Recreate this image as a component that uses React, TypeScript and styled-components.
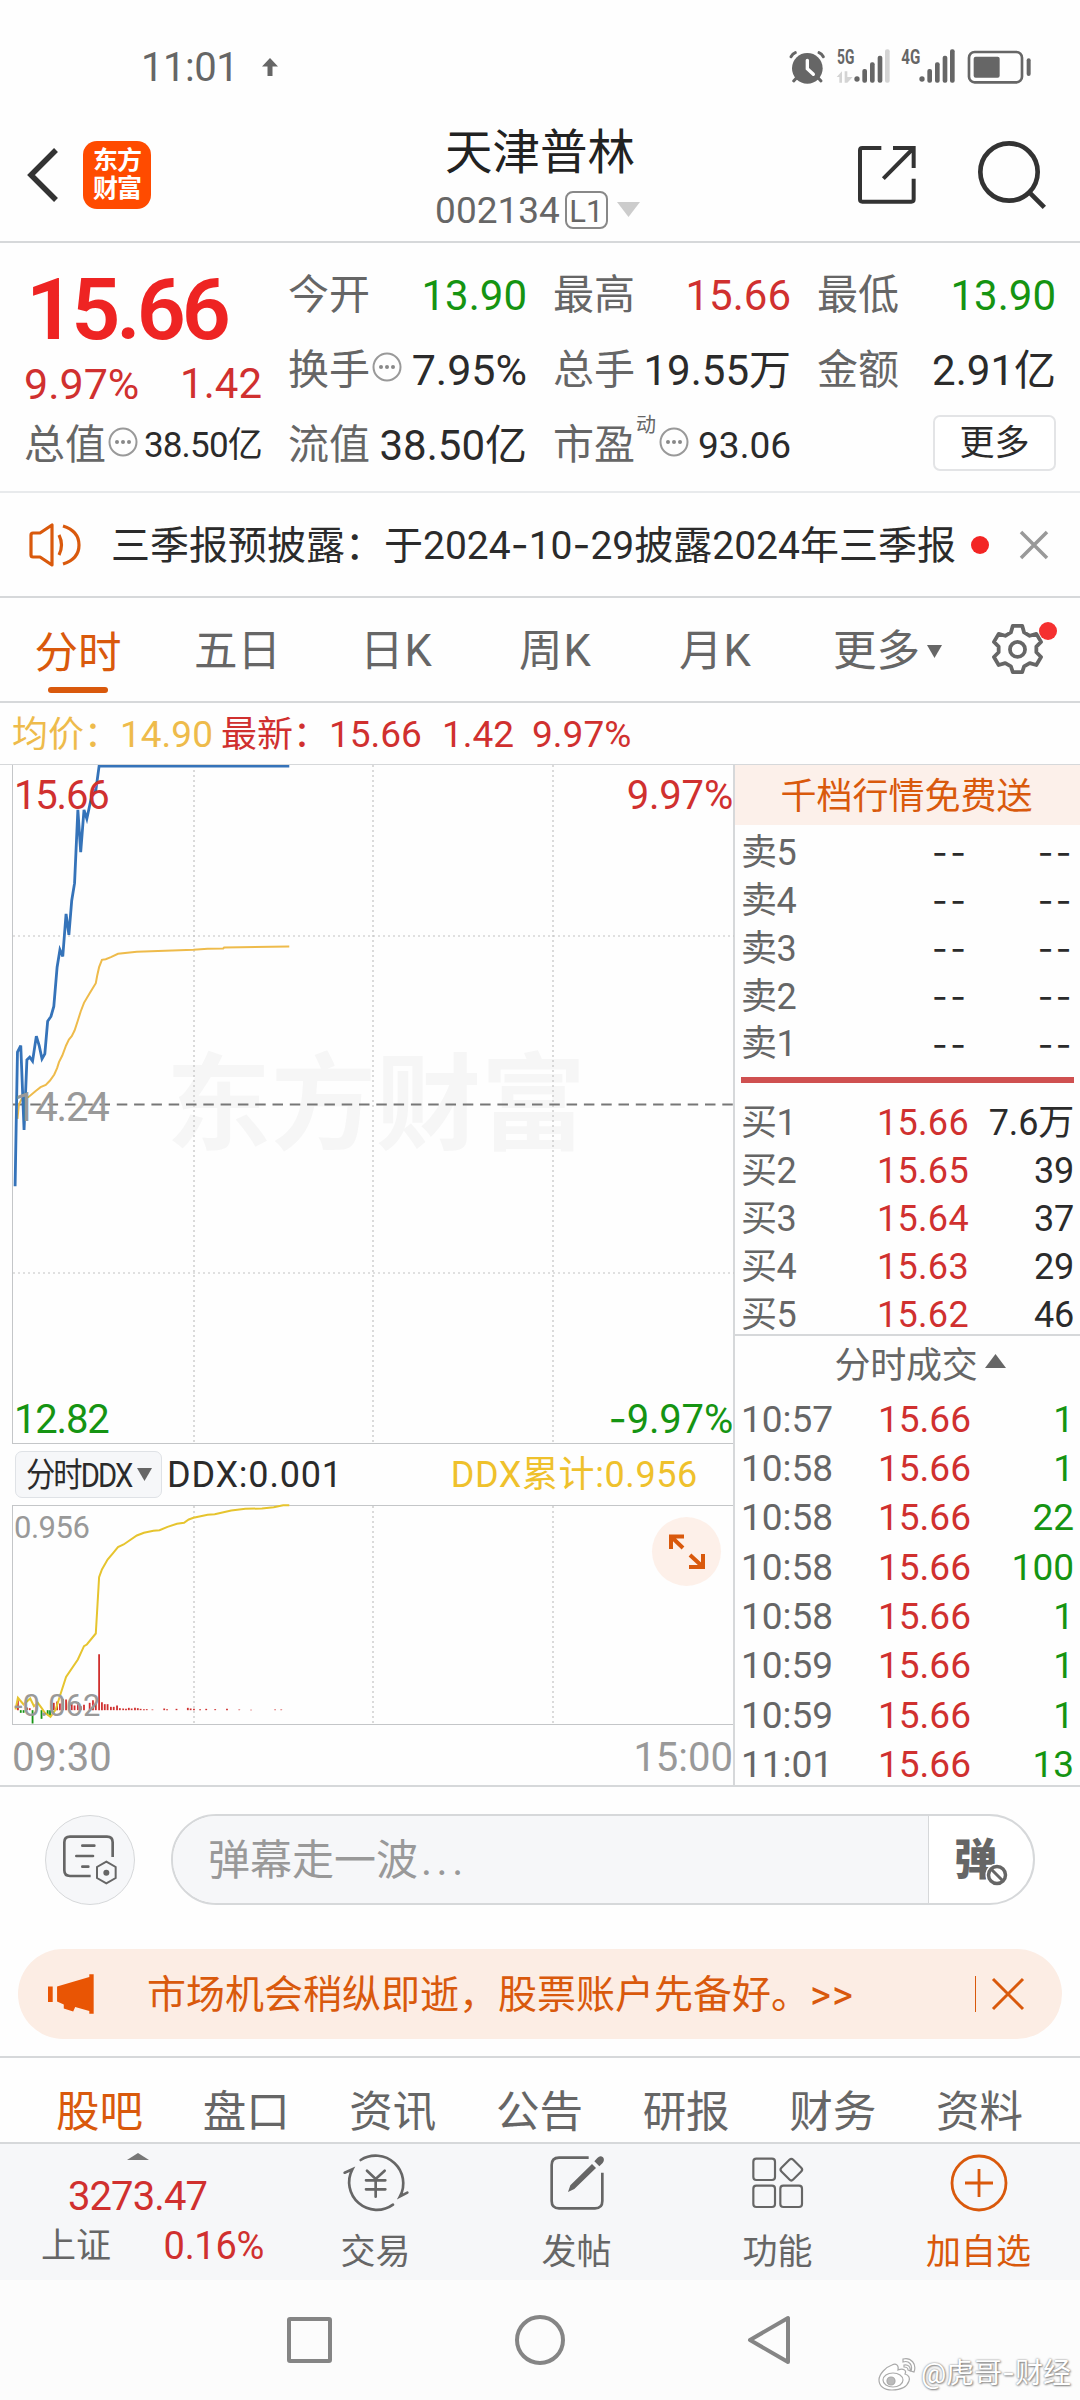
import React from "react";
import styled, { createGlobalStyle } from "styled-components";

const C = {
  red: "#d0302f",
  bright: "#ee2423",
  green: "#159412",
  orange: "#d9590c",
  text: "#2b2b2b",
  gray: "#666666",
  light: "#999999",
  line: "#d6d8da",
  yellow: "#efc12c",
  avg: "#eebb4b",
  blue: "#3573b9",
  peach: "#fcede4",
  panel: "#f6f7f9",
};

const Global = createGlobalStyle`
  * { box-sizing: border-box; }
  body { margin: 0; background: #fefefe; }
`;

const Page = styled.div`
  width: 1080px;
  height: 2400px;
  overflow: hidden;
  display: flex;
  flex-direction: column;
  background: #fefefe;
  color: ${C.text};
  font-family: Roboto, "Noto Sans CJK SC", sans-serif;
`;

const T = styled.span<{ $s: number; $c?: string; $w?: number; $ls?: number; $ml?: number }>`
  display: block;
  flex: none;
  padding-top: 3px;
  white-space: pre;
  line-height: 1.2;
  font-size: ${(p) => p.$s}px;
  color: ${(p) => p.$c ?? C.text};
  font-weight: ${(p) => p.$w ?? 400};
  letter-spacing: ${(p) => p.$ls ?? 0}px;
  margin-left: ${(p) => p.$ml ?? 0}px;
`;

const Dash = styled.span`
  font-family: Inter, sans-serif;
  line-height: 1;
`;

const Condensed = styled.div`
  width: 104px;
  transform: scaleX(0.86);
  transform-origin: left center;
`;

const Svg = styled.svg<{ $ml?: number; $mt?: number }>`
  display: block;
  flex: none;
  overflow: visible;
  margin-left: ${(p) => p.$ml ?? 0}px;
  margin-top: ${(p) => p.$mt ?? 0}px;
`;

/* ---------- status bar ---------- */
const StatusBar = styled.div`
  height: 112px;
  padding: 21px 49px 0 141px;
  display: flex;
  align-items: center;
  justify-content: space-between;
`;
const Cluster = styled.div<{ $gap?: number }>`
  display: flex;
  align-items: center;
  gap: ${(p) => p.$gap ?? 0}px;
`;

const StatusIcons = () => (
  <Svg width="242" height="36" viewBox="25 37 726 108">
    <g fill="#666">
      <circle cx="80" cy="95" r="46" />
      <g stroke="#666" strokeWidth="9" strokeLinecap="round" fill="none">
        <path d="M31 60q5-9 13-12M128 60q-5-9-13-12M48 123l-9 10M112 123l9 10" />
      </g>
      <path d="M80 71v25l18 17" stroke="#fff" strokeWidth="10" strokeLinecap="round" fill="none" />
      <circle cx="229" cy="127" r="8" />
      <rect x="245" y="97" width="14" height="41" rx="6" />
      <rect x="268" y="77" width="14" height="61" rx="6" />
      <rect x="291" y="57" width="14" height="81" rx="6" />
      <rect x="313" y="38" width="14" height="100" rx="6" fill="#d4d4d4" />
      <path d="M168 121l16-17v34h-8v-17zM192 104h8v17h16l-16 17h-8z" fill="#d4d4d4" />
      <circle cx="424" cy="127" r="8" />
      <rect x="440" y="97" width="14" height="41" rx="6" />
      <rect x="463" y="77" width="14" height="61" rx="6" />
      <rect x="486" y="57" width="14" height="81" rx="6" />
      <rect x="508" y="38" width="14" height="100" rx="6" />
      <rect x="565" y="46" width="159" height="91" rx="17" fill="none" stroke="#666" strokeWidth="8" />
      <rect x="579" y="60" width="78" height="63" rx="6" />
      <rect x="738" y="65" width="12" height="53" rx="6" />
      <text x="169" y="83" fontSize="62" fontWeight="700" textLength="52" lengthAdjust="spacingAndGlyphs">5G</text>
      <text x="362" y="83" fontSize="62" fontWeight="700" textLength="57" lengthAdjust="spacingAndGlyphs">4G</text>
    </g>
  </Svg>
);

/* ---------- header ---------- */
const Header = styled.header`
  height: 131px;
  border-bottom: 2px solid ${C.line};
  display: grid;
  grid-template-columns: 400px 280px 400px;
`;
const HeaderLeft = styled.div`
  display: flex;
  align-items: center;
  padding: 0 0 3px 27px;
`;
const Logo = styled.div`
  width: 68px;
  height: 68px;
  margin-left: 25px;
  border-radius: 14px;
  background: #ff4b00;
  display: flex;
  flex-direction: column;
  align-items: center;
  justify-content: center;
  color: #fff;
  font-size: 25px;
  line-height: 28px;
  font-weight: 700;
  letter-spacing: -1px;
`;
const HeaderMid = styled.div`
  display: flex;
  flex-direction: column;
  align-items: center;
  padding-top: 10px;
`;
const CodeRow = styled.div`
  display: flex;
  align-items: center;
  margin: 4px 5px 0 0;
`;
const Level = styled.div`
  width: 43px;
  height: 38px;
  margin: 0 9px 0 5px;
  border: 2px solid #888;
  border-radius: 8px;
  display: flex;
  align-items: center;
  justify-content: center;
`;
const HeaderRight = styled.div`
  display: flex;
  align-items: center;
  justify-content: flex-end;
  padding: 0 34px 3px 0;
  gap: 62px;
`;

/* ---------- quote ---------- */
const Quote = styled.section`
  height: 250px;
  padding: 14px 24px 0;
  border-bottom: 2px solid #e8eaec;
  display: grid;
  grid-template-columns: 238px 239px 238px 239px;
  column-gap: 26px;
`;
const Col = styled.div`
  display: flex;
  flex-direction: column;
`;
const Cell = styled.div<{ $h?: number }>`
  height: ${(p) => p.$h ?? 75}px;
  display: flex;
  align-items: center;
  justify-content: space-between;
`;
const BigPrice = styled.div`
  height: 103px;
  padding-left: 2px;
  display: flex;
  align-items: center;
`;
const MoreBtn = styled.button`
  width: 123px;
  height: 56px;
  margin-left: auto;
  padding: 0;
  background: #fff;
  border: 2px solid #e3e4e6;
  border-radius: 7px;
  display: flex;
  align-items: center;
  justify-content: center;
  font-family: inherit;
`;
const Sup = styled.span`
  align-self: flex-start;
  font-size: 20px;
  line-height: 24px;
  color: ${C.gray};
  margin: -5px 0 0 1px;
`;
const Info = ({ ml = 0 }: { ml?: number }) => (
  <Svg width="30" height="30" viewBox="0 0 30 30" $ml={ml} $mt={-5}>
    <circle cx="15" cy="15" r="13.5" fill="none" stroke="#999" strokeWidth="2" />
    <g fill="#888"><circle cx="9" cy="15" r="2" /><circle cx="15" cy="15" r="2" /><circle cx="21" cy="15" r="2" /></g>
  </Svg>
);

/* ---------- news + tabs ---------- */
const News = styled.section`
  height: 105px;
  padding: 0 30px 0 29px;
  border-bottom: 2px solid ${C.line};
  display: flex;
  align-items: center;
`;
const Dot = styled.i<{ $d: number; $ml?: number }>`
  flex: none;
  width: ${(p) => p.$d}px;
  height: ${(p) => p.$d}px;
  margin-left: ${(p) => p.$ml ?? 0}px;
  border-radius: 50%;
  background: #f32524;
`;
const Tabs = styled.nav`
  height: 105px;
  padding-left: 34px;
  border-bottom: 2px solid ${C.line};
  display: grid;
  grid-template-columns: 160px 166px 159px 160px 154px 247px;
  align-items: center;
`;
const Tab = styled.div`
  height: 103px;
  padding-top: 3px;
  display: flex;
  align-items: center;
`;
const ActiveTab = styled.div`
  height: 103px;
  width: 88px;
  padding-top: 27px;
  display: flex;
  flex-direction: column;
  align-items: center;
  gap: 7px;
`;
const Underline = styled.i`
  width: 60px;
  height: 6px;
  border-radius: 3px;
  background: ${C.orange};
`;
const MoreTab = styled(Tab)`
  gap: 7px;
`;
const GearWrap = styled.div`
  position: relative;
  margin-left: 44px;
`;
const GearDot = styled.i`
  position: absolute;
  right: -15px;
  top: -8px;
  width: 18px;
  height: 18px;
  border-radius: 50%;
  background: #f53030;
`;
const Legend = styled.div`
  height: 61px;
  padding: 1px 0 0 12px;
  display: flex;
  align-items: center;
`;

/* ---------- chart area ---------- */
const Market = styled.section`
  height: 1023px;
  display: grid;
  grid-template-columns: 735px 345px;
  border-top: 1.5px solid ${C.line};
  border-bottom: 2px solid ${C.line};
  overflow: hidden;
`;
const Left = styled.div`
  border-right: 2px solid ${C.line};
  padding-left: 12px;
`;
const Plot = styled.div<{ $h: number }>`
  position: relative;
  height: ${(p) => p.$h}px;
  border-left: 1.5px solid #c4c6c8;
  border-bottom: 1.5px solid #c4c6c8;
`;
const Tag = styled.div<{ $top: number; $right?: boolean }>`
  position: absolute;
  top: ${(p) => p.$top}px;
  ${(p) => (p.$right ? "right: 0;" : "left: 1px;")}
`;
const Watermark = styled.div`
  position: absolute;
  left: 153px;
  top: 276px;
  font-size: 105px;
  line-height: 130px;
  font-weight: 700;
  color: #f6f6f6;
  white-space: nowrap;
`;
const Layer = styled.svg`
  position: absolute;
  left: 0;
  top: 0;
  overflow: visible;
`;
const DdxBar = styled.div`
  height: 62px;
  padding: 0 0 0 3px;
  display: flex;
  align-items: center;
  border-bottom: 1.5px solid #c4c6c8;
`;
const DdxBtn = styled.div`
  width: 147px;
  height: 47px;
  margin-right: 5px;
  padding: 0 9px 0 10px;
  border: 1.5px solid #dfe2e6;
  border-radius: 7px;
  background: ${C.panel};
  display: flex;
  align-items: center;
  justify-content: space-between;
`;
const Expand = styled.div`
  position: absolute;
  right: 12px;
  top: 11px;
  width: 69px;
  height: 69px;
  border-radius: 50%;
  background: #fdf0e9;
`;
const Times = styled.div`
  height: 63px;
  display: flex;
  align-items: center;
  justify-content: space-between;
`;

const verticals = (xs: number[]) =>
  xs.map((x) => <line key={x} x1={x} x2={x} y1="0" y2="100%" stroke="#c2c2c2" strokeWidth="1.2" strokeDasharray="2 3" />);

const PRICE = "32,1307 37,905 44,885 51,1138 57,928 63,920 69,932 77,857 83,885 89,925 95,910 101,812 108,798 114,768 121,650 127,598 133,618 140,490 146,553 152,450 158,398 165,178 171,305 178,178 184,205 190,165 197,120 203,120 210,47 613,47";
const AVG = "37,1105 40,1062 46,1045 60,1040 75,1022 86,1010 97,1003 106,990 115,972 121,953 125,935 132,915 140,885 146,867 152,857 158,840 165,810 171,783 178,757 190,728 203,698 206,675 210,650 216,628 224,626 235,620 250,610 290,604 320,602 410,598 440,595 473,594 475,591 613,588";
const CUM = "33,990 38,955 50,975 64,957 72,980 80,970 88,985 95,1000 107,1012 118,990 128,945 140,892 165,840 178,800 184,795 203,762 206,690 210,593 216,570 228,540 240,520 250,503 262,495 290,468 305,460 325,454 338,452 355,442 375,433 390,430 400,420 410,415 440,406 455,404 490,393 520,388 555,387 580,383 600,377 613,377";
const BARS: [number, number][] = [
  [38, -30], [57, -8], [63, -6], [77, -12], [114, -22], [121, -26], [127, -20], [133, -34], [140, -32], [146, -14], [152, -18],
  [158, -14], [165, -24], [171, -12], [178, -16], [190, -22], [197, -30], [203, -20], [210, -168], [216, -24], [222, -18],
  [228, -18], [235, -10], [241, -10], [248, -14], [254, -6], [261, -5], [267, -4], [273, -7], [279, -5], [286, -7], [292, -6],
  [298, -4], [305, -3], [311, -3], [323, -2], [348, -5], [354, -3], [374, -4], [398, -7], [404, -5], [411, -4], [424, -3],
  [437, -4], [456, -3], [481, -4], [507, -2], [532, -1], [583, -2], [596, -2], [44, 8], [50, 8], [69, 40], [88, 26], [101, 14], [106, 18],
];

/* ---------- order book ---------- */
const Right = styled.div`
  display: flex;
  flex-direction: column;
`;
const Promo = styled.div`
  height: 60px;
  background: #fcf0ea;
  display: flex;
  align-items: center;
  justify-content: center;
  padding: 3px 2px 0 0;
`;
const Rows = styled.div<{ $pt: number }>`
  padding: ${(p) => p.$pt}px 6px 0 6px;
`;
const Row = styled.div<{ $h: number; $mid: number }>`
  height: ${(p) => p.$h}px;
  display: grid;
  grid-template-columns: ${(p) => p.$mid}px 1fr;
  align-items: center;
`;
const Pair = styled.div`
  display: flex;
  align-items: center;
  justify-content: space-between;
`;
const RedBar = styled.div`
  height: 6px;
  margin: 10px 6px 0;
  background: #cf5050;
`;
const TradesHead = styled.div`
  height: 60px;
  margin-top: -4px;
  padding-left: 26px;
  border-top: 2px solid ${C.line};
  display: flex;
  align-items: center;
  justify-content: center;
  gap: 8px;
`;

/* ---------- comment + banner ---------- */
const Comment = styled.section`
  height: 145px;
  padding: 0 45px;
  display: flex;
  align-items: center;
  justify-content: space-between;
`;
const RoundBtn = styled.div`
  width: 90px;
  height: 90px;
  border-radius: 50%;
  border: 1.5px solid ${C.line};
  background: ${C.panel};
  display: flex;
  align-items: center;
  justify-content: center;
`;
const Field = styled.div`
  width: 864px;
  height: 91px;
  border: 2px solid ${C.line};
  border-radius: 46px;
  background: #fff;
  display: grid;
  grid-template-columns: 756px 1fr;
  overflow: hidden;
`;
const FieldInput = styled.div`
  background: ${C.panel};
  border-right: 1.5px solid ${C.line};
  padding-left: 35px;
  display: flex;
  align-items: center;
`;
const FieldAction = styled.div`
  position: relative;
  padding-left: 25px;
  display: flex;
  align-items: center;
`;
const Ban = styled.svg`
  position: absolute;
  left: 56px;
  top: 47px;
`;
const Banner = styled.section`
  height: 90px;
  margin: 17px 18px 17px;
  padding: 0 38px 0 30px;
  border-radius: 45px;
  background: ${C.peach};
  display: flex;
  align-items: center;
`;
const Rule = styled.i`
  width: 1.5px;
  height: 36px;
  margin-left: auto;
  background: ${C.orange};
`;

/* ---------- bottom ---------- */
const SubTabs = styled.nav`
  height: 88px;
  padding: 23px 57px 0 56px;
  border-top: 2px solid ${C.line};
  border-bottom: 2px solid ${C.line};
  display: flex;
  align-items: center;
  justify-content: space-between;
`;
const Dock = styled.div`
  height: 136px;
  background: ${C.panel};
  display: grid;
  grid-template-columns: 275px 201px 201px 201px 201px;
`;
const Index = styled.div`
  display: flex;
  flex-direction: column;
  align-items: center;
  padding-top: 9px;
`;
const IndexValue = styled.div`
  margin-top: 10px;
`;
const IndexRow = styled.div`
  width: 275px;
  padding: 0 11px 0 41px;
  display: flex;
  align-items: center;
  justify-content: space-between;
`;
const DockItem = styled.div`
  display: flex;
  flex-direction: column;
  align-items: center;
  padding-top: 10px;
  gap: 17px;
`;
const SysNav = styled.footer`
  position: relative;
  flex: 1;
  background: #fcfcfc;
  display: flex;
  align-items: flex-start;
  padding: 34px 0 0 285px;
`;
const Credit = styled.div`
  position: absolute;
  right: 9px;
  bottom: 9px;
  display: flex;
  align-items: center;
  gap: 3px;
  color: #fff;
  font-size: 28px;
  line-height: 34px;
  white-space: nowrap;
  text-shadow: 0 0 2px #777, 1px 1px 2px #888;
`;

const Stat = ({ label, value, c, s = 42, ls = 0, info }: { label: string; value: string; c?: string; s?: number; ls?: number; info?: boolean }) => (
  <Cell>
    <Cluster $gap={2}>
      <T $s={41} $c={C.gray}>{label}</T>
      {info && <Info />}
    </Cluster>
    <T $s={s} $c={c} $ls={ls}>{value}</T>
  </Cell>
);

const buys = [["买1", "15.66", "7.6万"], ["买2", "15.65", "39"], ["买3", "15.64", "37"], ["买4", "15.63", "29"], ["买5", "15.62", "46"]];
const trades = [["10:57", "1"], ["10:58", "1"], ["10:58", "22"], ["10:58", "100"], ["10:58", "1"], ["10:59", "1"], ["10:59", "1"], ["11:01", "13"]];

export default function App() {
  return (
    <Page>
      <Global />
      <StatusBar>
        <Cluster $gap={24}>
          <T $s={40} $c={C.gray} $ls={-0.5}>11:01</T>
          <Svg width="16" height="18" viewBox="0 0 16 18"><path d="M8 0l8 8.500h-5.500v9.500h-5V8.500H0z" fill="#666" /></Svg>
        </Cluster>
        <StatusIcons />
      </StatusBar>

      <Header>
        <HeaderLeft>
          <Svg width="31" height="54" viewBox="0 0 31 54"><path d="M29 2L4 27l25 25" fill="none" stroke="#333" strokeWidth="5.500" /></Svg>
          <Logo><span>东方</span><span>财富</span></Logo>
        </HeaderLeft>
        <HeaderMid>
          <T $s={47.5} $c="#222">天津普林</T>
          <CodeRow>
            <T $s={37} $c={C.gray}>002134</T>
            <Level><T $s={31} $c={C.gray}>L1</T></Level>
            <Svg width="23" height="15" viewBox="0 0 23 15"><path d="M0 0h23L11.500 15z" fill="#ccc" /></Svg>
          </CodeRow>
        </HeaderMid>
        <HeaderRight>
          <Svg width="58" height="58" viewBox="233 335 174 174">
            <path d="M303 341H246q-7 0-7 7V495q0 7 7 7H393q7 0 7-7V433M338 341H400V401M400 341L309 433" fill="none" stroke="#333" strokeWidth="12" />
          </Svg>
          <Svg width="68" height="68" viewBox="594 318 204 204">
            <circle cx="687" cy="411" r="86" fill="none" stroke="#333" strokeWidth="14" />
            <path d="M748 472L793 517" stroke="#333" strokeWidth="14" />
          </Svg>
        </HeaderRight>
      </Header>

      <Quote>
        <Col>
          <BigPrice><T $s={86} $c={C.bright} $w={600} $ls={-4}>15.66</T></BigPrice>
          <Cell $h={46}>
            <T $s={43} $c={C.red}>9.97%</T>
            <T $s={42} $c={C.red}>1.42</T>
          </Cell>
          <Cell $h={76}>
            <Cluster $gap={2}><T $s={41} $c={C.gray}>总值</T><Info /></Cluster>
            <T $s={35} $ls={-0.8}>38.50亿</T>
          </Cell>
        </Col>
        <Col>
          <Stat label="今开" value="13.90" c={C.green} />
          <Stat label="换手" value="7.95%" s={43} info />
          <Stat label="流值" value="38.50亿" />
        </Col>
        <Col>
          <Stat label="最高" value="15.66" c={C.red} />
          <Stat label="总手" value="19.55万" />
          <Cell>
            <Cluster>
              <T $s={41} $c={C.gray}>市盈</T>
              <Sup>动</Sup>
              <Info ml={3} />
            </Cluster>
            <T $s={37}>93.06</T>
          </Cell>
        </Col>
        <Col>
          <Stat label="最低" value="13.90" c={C.green} />
          <Stat label="金额" value="2.91亿" />
          <Cell $h={71}><MoreBtn><T $s={35}>更多</T></MoreBtn></Cell>
        </Col>
      </Quote>

      <News>
        <Svg width="52" height="44" viewBox="0 0 52 44">
          <g fill="none" stroke={C.orange} strokeWidth="3.2" strokeLinejoin="round">
            <path d="M2 12q0-2 2-2h7L23 2v40L11 34H4q-2 0-2-2z" />
            <path d="M30 12q5 10 0 20M34 3q16 5 16 19T34 41" />
          </g>
        </Svg>
        <T $s={39} $ml={30}>三季报预披露：于2024<Dash>-</Dash>10<Dash>-</Dash>29披露2024年三季报</T>
        <Dot $d={18} $ml={15} />
        <Svg width="28" height="28" viewBox="0 0 28 28" $ml={31}><path d="M1 1l26 26M27 1L1 27" stroke="#999" strokeWidth="3.500" /></Svg>
      </News>

      <Tabs>
        <ActiveTab><T $s={43.5} $c={C.orange}>分时</T><Underline /></ActiveTab>
        <Tab><T $s={43.5} $c={C.gray}>五日</T></Tab>
        <Tab><T $s={43.5} $c={C.gray} $ls={1}>日K</T></Tab>
        <Tab><T $s={43.5} $c={C.gray} $ls={1}>周K</T></Tab>
        <Tab><T $s={43.5} $c={C.gray} $ls={1}>月K</T></Tab>
        <MoreTab>
          <T $s={43.5} $c={C.gray}>更多</T>
          <Svg width="15" height="13" viewBox="0 0 15 13"><path d="M0 0h15L7.500 13z" fill="#666" /></Svg>
          <GearWrap>
            <Svg width="49" height="49" viewBox="0 0 52 52" $mt={-6}>
              <path d="M21 2h10l2 7 6 3.500 7-2 5 8.500-5 5v6l5 5-5 8.500-7-2-6 3.500-2 6H21l-2-6-6-3.500-7 2L1 35l5-5v-6l-5-5 5-8.500 7 2L19 9z" fill="none" stroke="#666" strokeWidth="4" strokeLinejoin="round" />
              <circle cx="26" cy="27" r="8" fill="none" stroke="#666" strokeWidth="4" />
            </Svg>
            <GearDot />
          </GearWrap>
        </MoreTab>
      </Tabs>

      <Legend>
        <T $s={36} $c={C.avg}>均价：</T>
        <T $s={37} $c={C.avg}>14.90</T>
        <T $s={36} $c={C.red} $ml={8}>最新：</T>
        <T $s={37} $c={C.red}>15.66</T>
        <T $s={37} $c={C.red} $ml={20}>1.42</T>
        <T $s={37} $c={C.red} $ml={18}>9.97%</T>
      </Legend>

      <Market>
        <Left>
          <Plot $h={678.5}>
            <Watermark>东方财富</Watermark>
            <Layer width="721" height="678">
              {verticals([181, 360, 540])}
              <line x1="0" x2="721" y1="171" y2="171" stroke="#c2c2c2" strokeWidth="1.2" strokeDasharray="2 3" />
              <line x1="0" x2="721" y1="508" y2="508" stroke="#c2c2c2" strokeWidth="1.2" strokeDasharray="2 3" />
              <line x1="0" x2="721" y1="339.500" y2="339.500" stroke="#777" strokeWidth="2" strokeDasharray="10.500 6.800" />
              <g transform="translate(-13 -14.500) scale(0.4719 0.33333)" fill="none">
                <polyline points={AVG} stroke={C.avg} strokeWidth="2" vectorEffect="non-scaling-stroke" />
                <polyline points={PRICE} stroke={C.blue} strokeWidth="2.800" vectorEffect="non-scaling-stroke" />
              </g>
            </Layer>
            <Tag $top={4}><T $s={40} $c={C.red} $ls={-1.2}>15.66</T></Tag>
            <Tag $top={4} $right><T $s={40} $c={C.red} $ls={-0.2}>9.97%</T></Tag>
            <Tag $top={316}><T $s={40} $c={C.light} $ls={-1.2}>14.24</T></Tag>
            <Tag $top={628}><T $s={40} $c={C.green} $ls={-1.2}>12.82</T></Tag>
            <Tag $top={628} $right><T $s={40} $c={C.green} $ls={-0.2}><Dash>-</Dash>9.97%</T></Tag>
          </Plot>
          <DdxBar>
            <DdxBtn>
              <Condensed><T $s={34} $ls={-2.2}>分时DDX</T></Condensed>
              <Svg width="15" height="13" viewBox="0 0 15 13"><path d="M0 0h15L7.500 13z" fill="#666" /></Svg>
            </DdxBtn>
            <T $s={36} $ls={0.8}>DDX:0.001</T>
            <T $s={36} $c={C.yellow} $ml={108} $ls={0.6}>DDX累计:0.956</T>
          </DdxBar>
          <Plot $h={219}>
            <Layer width="721" height="218">
              {verticals([181, 360, 540])}
              <g transform="translate(-13 -126.500) scale(0.4719 0.33333)" fill="none">
                {BARS.map(([x, h], i) => (
                  <line key={i} x1={x} x2={x} y1={992} y2={992 + h} stroke={h < 0 ? C.red : C.green} strokeWidth="1.800" vectorEffect="non-scaling-stroke" />
                ))}
                <polyline points={CUM} stroke="#e6c42e" strokeWidth="2" vectorEffect="non-scaling-stroke" />
              </g>
            </Layer>
            <Tag $top={0}><T $s={31} $c={C.light} $ls={-0.5}>0.956</T></Tag>
            <Tag $top={178}><T $s={31} $c={C.light}>-0.062</T></Tag>
            <Expand>
              <Svg width="69" height="69" viewBox="0 0 69 69">
                <path d="M19 32V19.500H32M19 19.500L31 31M51 37V50H37M51 50L38 38" fill="none" stroke={C.orange} strokeWidth="4" />
              </Svg>
            </Expand>
          </Plot>
          <Times><T $s={40} $c={C.light}>09:30</T><T $s={40} $c={C.light}>15:00</T></Times>
        </Left>

        <Right>
          <Promo><T $s={36} $c={C.orange}>千档行情免费送</T></Promo>
          <Rows $pt={3}>
            {[5, 4, 3, 2, 1].map((n) => (
              <Row key={n} $h={47.9} $mid={191}>
                <T $s={36} $c={C.gray} $ls={-0.5}>{"卖" + n}</T>
                <Pair><T $s={34} $ls={2.5}><Dash>--</Dash></T><T $s={34} $ls={2.5}><Dash>--</Dash></T></Pair>
              </Row>
            ))}
          </Rows>
          <RedBar />
          <Rows $pt={15}>
            {buys.map(([n, p, q]) => (
              <Row key={n} $h={47.9} $mid={136}>
                <T $s={36} $c={C.gray} $ls={-0.5}>{n}</T>
                <Pair><T $s={36} $c={C.red} $ls={0.3}>{p}</T><T $s={36} $ls={-0.2}>{q}</T></Pair>
              </Row>
            ))}
          </Rows>
          <TradesHead>
            <T $s={36} $c={C.gray} $ls={-0.3}>分时成交</T>
            <Svg width="21" height="14" viewBox="0 0 21 14" $mt={-7}><path d="M10.500 0L21 14H0z" fill="#666" /></Svg>
          </TradesHead>
          <Rows $pt={0}>
            {trades.map(([t, q], i) => (
              <Row key={i} $h={49.3} $mid={137}>
                <T $s={37} $c={C.gray}>{t}</T>
                <Pair><T $s={37} $c={C.red}>15.66</T><T $s={37} $c={C.green}>{q}</T></Pair>
              </Row>
            ))}
          </Rows>
        </Right>
      </Market>

      <Comment>
        <RoundBtn>
          <Svg width="54" height="50" viewBox="104 82 162 150">
            <g fill="none" stroke="#666" strokeWidth="8">
              <path d="M253 148V104q0-17-17-17H125q-17 0-17 17v84q0 17 17 17h62" />
              <path d="M162 114h36M144 145h50M162 177h18" strokeLinecap="round" />
              <path d="M234 162l28 16v33l-28 16-28-16v-33z" strokeWidth="6" />
            </g>
            <circle cx="234" cy="195" r="9" fill="#666" />
          </Svg>
        </RoundBtn>
        <Field>
          <FieldInput>
            <T $s={42} $c={C.light}>弹幕走一波</T>
            <T $s={42} $c={C.light} $ml={3} $ls={4.5}>...</T>
          </FieldInput>
          <FieldAction>
            <T $s={43} $c={C.gray} $w={900}>弹</T>
            <Ban width="24" height="24" viewBox="0 0 24 24">
              <circle cx="12" cy="12" r="11.500" fill="#fff" />
              <circle cx="12" cy="12" r="8.500" fill="none" stroke="#666" strokeWidth="3.500" />
              <path d="M6 6l12 12" stroke="#666" strokeWidth="3" />
            </Ban>
          </FieldAction>
        </Field>
      </Comment>

      <Banner>
        <Svg width="46" height="40" viewBox="53 494 137 118">
          <path d="M53 531h14v46H53zM80 531L176 502V494h13v118H176v-8l-42-12-6 13-28-9v-12L80 575z" fill="#e95504" />
        </Svg>
        <T $s={39} $c={C.orange} $ml={53}>市场机会稍纵即逝，股票账户先备好。</T>
        <T $s={40} $c={C.orange} $ls={1}>&gt;&gt;</T>
        <Rule />
        <Svg width="32" height="32" viewBox="0 0 32 32" $ml={16}><path d="M1 1l30 30M31 1L1 31" stroke={C.orange} strokeWidth="3" /></Svg>
      </Banner>

      <SubTabs>
        {["股吧", "盘口", "资讯", "公告", "研报", "财务", "资料"].map((t, i) => (
          <T key={t} $s={43.5} $c={i ? C.gray : C.orange}>{t}</T>
        ))}
      </SubTabs>

      <Dock>
        <Index>
          <Svg width="22" height="7" viewBox="0 0 22 7"><path d="M11 0l11 7H0z" fill="#777" /></Svg>
          <IndexValue><T $s={40} $c={C.red} $ls={-0.9}>3273.47</T></IndexValue>
          <IndexRow><T $s={35} $c={C.gray}>上证</T><T $s={38} $c={C.red} $ls={-0.3}>0.16%</T></IndexRow>
        </Index>
        <DockItem>
          <Svg width="66" height="58" viewBox="38 30 198 174">
            <g fill="none" stroke="#666" strokeWidth="8" strokeLinecap="round">
              <path d="M91 48A83 83 0 0 1 209 157L231 146M188 182A83 83 0 0 1 66 76L43 86" />
              <path d="M110 80l26 25 27-25M107 109h58M107 136h58M136 107v51" />
            </g>
          </Svg>
          <T $s={35} $c={C.gray}>交易</T>
        </DockItem>
        <DockItem>
          <Svg width="56" height="58" viewBox="657 30 168 174">
            <path d="M776 41H687q-22 0-22 22V171q0 22 22 22H795q22 0 22-22V86" fill="none" stroke="#666" strokeWidth="8" />
            <path d="M714 144l7-20 65-64 12 12-65 63zM793 52l9-10q9-9 17-2 6 8-1 17l-10 10z" fill="#666" />
          </Svg>
          <T $s={35} $c={C.gray}>发帖</T>
        </DockItem>
        <DockItem>
          <Svg width="54" height="58" viewBox="1264 30 162 174">
            <g fill="none" stroke="#666" strokeWidth="6.500">
              <rect x="1271" y="44" width="65" height="64" rx="9" />
              <rect x="1271" y="125" width="65" height="64" rx="9" />
              <rect x="1352" y="125" width="65" height="64" rx="9" />
              <rect x="1360" y="52" width="50" height="50" rx="8" transform="rotate(45 1385 77)" />
            </g>
          </Svg>
          <T $s={35} $c={C.gray}>功能</T>
        </DockItem>
        <DockItem>
          <Svg width="58" height="58" viewBox="0 0 58 58">
            <g fill="none" stroke={C.orange} strokeWidth="2.800"><circle cx="29" cy="29" r="27" /><path d="M29 15v28M15 29h28" /></g>
          </Svg>
          <T $s={35} $c={C.orange}>加自选</T>
        </DockItem>
      </Dock>

      <SysNav>
        <Svg width="510" height="52" viewBox="0 0 510 52">
          <g fill="none" stroke="#858585" strokeWidth="4" strokeLinejoin="round">
            <rect x="4" y="5" width="41" height="42" rx="1" />
            <circle cx="255" cy="26" r="23" />
            <path d="M503 4v44L465 26z" />
          </g>
        </Svg>
        <Credit>
          <svg width="40" height="34" viewBox="0 0 40 34">
            <g fill="#fff" stroke="#aaa" strokeWidth="1.200">
              <path d="M14 8c4-2 7 0 6 5 5-2 9 0 7 4 4 1 5 4 4 7-2 6-9 9-17 9C6 33 1 29 1 23 1 17 8 10 14 8z" />
              <ellipse cx="15" cy="23" rx="10" ry="7" />
              <circle cx="13" cy="24" r="4" fill="#bbb" />
              <path d="M25 2c8-2 14 5 11 13l-3-1c2-6-2-11-8-9zM26 8c4-1 7 2 6 6l-2-1c0-2-1-3-4-3z" />
            </g>
          </svg>
          <span>@虎哥<Dash>-</Dash>财经</span>
        </Credit>
      </SysNav>
    </Page>
  );
}
